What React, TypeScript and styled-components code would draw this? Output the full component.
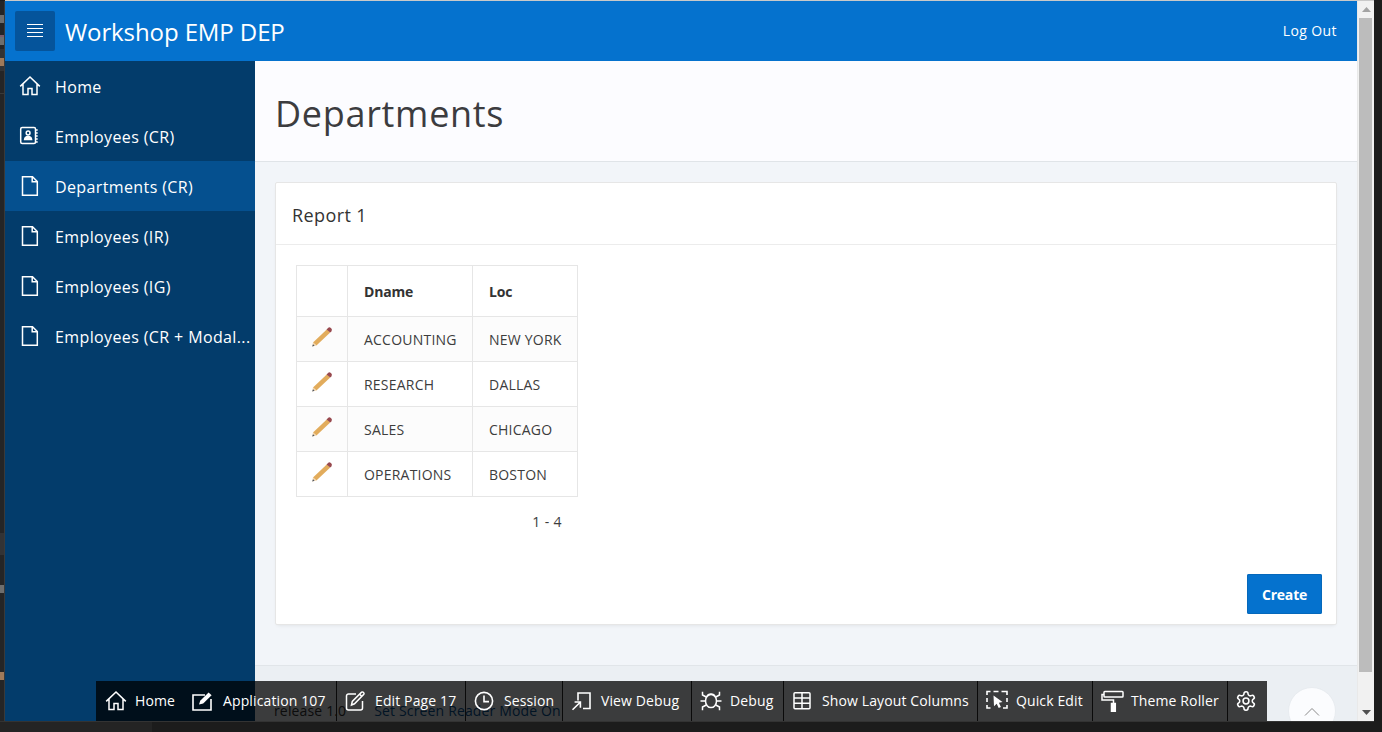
import React from "react";
import styled, { createGlobalStyle } from "styled-components";

const Global = createGlobalStyle`
  html, body { margin: 0; padding: 0; height: 100%; overflow: hidden; background: #1c1c1c; }
  body { font-family: "Open Sans", "Noto Sans", "Liberation Sans", sans-serif; }
  * { box-sizing: border-box; }
`;

const Desk = styled.div`
  width: 1382px;
  height: 732px;
  display: flex;
  flex-direction: column;
  background: #1c1c1c;
  overflow: hidden;
`;
const TopEdge = styled.div`
  height: 1px;
  flex: none;
  margin-left: 5px;
  width: 1369px;
  background: #c9c9c9;
`;
const Middle = styled.div`
  flex: none;
  height: 720px;
  display: flex;
`;
const BottomEdge = styled.div`
  flex: 1;
  display: flex;
  border-top: 1px solid #333;
  margin-right: 8px;
`;
const BottomLeft = styled.div`
  width: 152px;
  background: #242424;
`;
const LeftStrip = styled.div`
  width: 5px;
  flex: none;
  background: #252526;
  border-right: 1px solid #3a3a3a;
  position: relative;
  overflow: hidden;
`;
const StripBit = styled.span<{ $top: number; $c: string; $h?: number }>`
  position: absolute;
  left: 0;
  top: ${(p) => p.$top}px;
  width: 4px;
  height: ${(p) => p.$h ?? 8}px;
  background: ${(p) => p.$c};
`;
const Browser = styled.div`
  width: 1352px;
  flex: none;
  height: 720px;
  display: flex;
  flex-direction: column;
  position: relative;
  overflow: hidden;
  background: #f2f5f9;
`;
const Header = styled.header`
  flex: none;
  height: 60px;
  background: #0572ce;
  display: flex;
  align-items: center;
  padding: 0 20px 0 10px;
  color: #fff;
`;
const MenuBtn = styled.button`
  width: 40px;
  height: 40px;
  border: 0;
  border-radius: 2px;
  background: #05549b;
  color: #fff;
  display: flex;
  align-items: center;
  justify-content: center;
  padding: 0;
`;
const Brand = styled.div`
  margin-left: 10px;
  font-size: 24px;
  line-height: 32px;
  letter-spacing: -0.1px;
  flex: 1;
  margin-top: 1px;
`;
const LogOut = styled.a`
  font-size: 14px;
  letter-spacing: 0.4px;
  color: #fff;
  padding-bottom: 2px;
`;
const Body = styled.div`
  flex: 1;
  display: flex;
  min-height: 0;
`;
const Side = styled.nav`
  width: 250px;
  flex: none;
  background: #033c6b;
  display: flex;
  flex-direction: column;
`;
const NavItem = styled.div<{ $active?: boolean }>`
  height: 50px;
  flex: none;
  display: flex;
  align-items: center;
  padding-left: 14px;
  gap: 14px;
  background: ${(p) => (p.$active ? "#05508f" : "transparent")};
  color: #fff;
  font-size: 16px;
  letter-spacing: 0.38px;
  white-space: nowrap;
  svg { flex: none; }
`;
const NavLabel = styled.span`
  padding-top: 1px;
`;
const Main = styled.main`
  flex: 1;
  min-width: 0;
  display: flex;
  flex-direction: column;
`;
const TitleBar = styled.div`
  flex: none;
  height: 101px;
  background: #fcfcff;
  border-bottom: 1px solid #e0e4e8;
  padding: 0 20px;
  display: flex;
  align-items: center;
`;
const Title = styled.h1`
  margin: 0 0 -5px 0;
  font-size: 36px;
  font-weight: 400;
  letter-spacing: 0.7px;
  color: #3c3c3f;
`;
const Content = styled.div`
  flex: none;
  height: 504px;
  padding: 20px 20px 0;
  border-bottom: 1px solid #e1e5e9;
`;
const Card = styled.section`
  height: 443px;
  background: #fff;
  border: 1px solid #e6e6e6;
  border-radius: 2px;
  box-shadow: 0 2px 4px -2px rgba(0, 0, 0, 0.1);
  display: flex;
  flex-direction: column;
`;
const CardTitle = styled.div`
  height: 62px;
  flex: none;
  border-bottom: 1px solid #ececec;
  display: flex;
  align-items: center;
  padding: 2px 16px 0;
  font-size: 18px;
  letter-spacing: 0.4px;
  color: #333;
`;
const CardBody = styled.div`
  flex: 1;
  padding: 20px 20px 10px;
  display: flex;
  flex-direction: column;
`;
const ReportWrap = styled.div`
  width: 282px;
`;
const Table = styled.table`
  width: 282px;
  border-collapse: collapse;
  table-layout: fixed;
  font-size: 14px;
  letter-spacing: 0.22px;
  color: #3d3d3d;
`;
const Th = styled.th`
  height: 51px;
  border: 1px solid #e6e6e6;
  text-align: left;
  padding: 0 16px;
  font-weight: 700;
  letter-spacing: -0.2px;
  color: #333;
  background: #fff;
`;
const Row = styled.tr<{ $alt: boolean }>`
  background: ${(p) => (p.$alt ? "#fcfcfc" : "#fff")};
`;
const Td = styled.td`
  height: 45px;
  border: 1px solid #e6e6e6;
  padding: 1px 0 0 16px;
  white-space: nowrap;
`;
const EditTd = styled.td`
  height: 45px;
  border: 1px solid #e6e6e6;
  padding: 0 0 6px 14px;
  line-height: 0;
`;
const Pager = styled.div`
  text-align: right;
  font-size: 14px;
  letter-spacing: 0.4px;
  color: #3d3d3d;
  padding: 15px 16px 0 0;
  line-height: 20px;
`;
const Actions = styled.div`
  margin-top: auto;
  display: flex;
  justify-content: flex-end;
  margin-right: -6px;
`;
const CreateBtn = styled.button`
  width: 75px;
  height: 40px;
  border: 0;
  border-radius: 2px;
  background: #0572ce;
  color: #fff;
  font-family: inherit;
  font-weight: 700;
  font-size: 14px;
  letter-spacing: -0.2px;
  box-shadow: inset 0 0 0 1px #0568bb;
`;
const Footer = styled.footer`
  flex: 1;
  display: flex;
  background: #ebeff3;
  align-items: flex-end;
  padding: 0 0 0 19px;
  gap: 28px;
  font-size: 14px;
  line-height: 20px;
  letter-spacing: 0.15px;
  color: #333;
`;
const FooterLink = styled.a`
  color: #055091;
`;
const Toolbar = styled.div`
  position: absolute;
  left: 91px;
  bottom: 0;
  height: 40px;
  display: flex;
  background: rgba(0, 0, 0, 0.75);
  color: #fff;
  font-size: 14px;
  letter-spacing: 0.12px;
`;
const Tool = styled.div<{ $w: number; $pad: number; $gap: number; $sep?: boolean }>`
  width: ${(p) => p.$w}px;
  flex: none;
  display: flex;
  align-items: center;
  gap: ${(p) => p.$gap}px;
  padding-left: ${(p) => p.$pad}px;
  white-space: nowrap;
  border-right: ${(p) => (p.$sep ? "1px solid #0a0a0a" : "0")};
  svg { flex: none; }
`;
const ToolLabel = styled.span`
  padding-bottom: 2px;
`;
const TopButton = styled.div`
  position: absolute;
  left: 1283px;
  top: 686px;
  width: 48px;
  height: 48px;
  border-radius: 50%;
  background: #fbfcfe;
  border: 1px solid #e8ecf0;
  display: flex;
  justify-content: center;
  padding-top: 19px;
  color: #8a8a8a;
`;
const Scrollbar = styled.div`
  width: 17px;
  flex: none;
  background: #f1f1f1;
  display: flex;
  flex-direction: column;
  border-left: 1px solid #e9e9e9;
`;
const ArrowBox = styled.div`
  height: 17px;
  flex: none;
  display: flex;
  align-items: center;
  justify-content: center;
`;
const Thumb = styled.div`
  width: 13px;
  margin-left: 1px;
  height: 654px;
  background: #bcbcbc;
`;
const Spacer = styled.div`
  flex: 1;
`;

const stroke = { fill: "none", stroke: "currentColor", strokeWidth: 1.3 } as const;

const HomeIcon = ({ size = 22 }: { size?: number }) => (
  <svg width={size} height={size} viewBox="0 0 22 22" {...stroke} strokeWidth={1.5}>
    <path d="M1.2 11.4 11 2l9.8 9.4M4 9v10.6h5v-6h4v6h5V9" strokeLinejoin="miter" />
  </svg>
);
const AddressIcon = () => (
  <svg width="22" height="22" viewBox="0 0 22 22" {...stroke}>
    <rect x="1.7" y="2.6" width="14.8" height="15.8" rx="1.5" strokeWidth="1.5" />
    <path d="M16.500 5h2.200M16.500 8h2.200M16.500 11h2.200M16.500 14h2.200M16.500 17h2.200" />
    <circle cx="9.100" cy="8" r="1.900" strokeWidth="1.500" />
    <path d="M5.500 14.500c.3-2.200 1.600-3 3.600-3s3.300.8 3.600 3z" fill="currentColor" />
  </svg>
);
const PageIcon = () => (
  <svg width="22" height="22" viewBox="0 0 22 22" {...stroke}>
    <path d="M3.500 1.700h10l4.800 4.800v13.800H3.500zM13.200 1.700v5h5" strokeWidth="1.500" />
  </svg>
);
const Pencil = () => (
  <svg width="22" height="22" viewBox="0 0 22 22">
    <path d="M2 17.500 16 4.200l3.200 3.200L5.400 20.600z" fill="#e2ac5c" />
    <path d="M2 17.500 5.400 20.600 1.200 21.600z" fill="#f5d7ae" />
    <path d="M1.200 21.600 2 19.200l1.600 1.600z" fill="#4b5563" />
    <path d="M15.600 4.600 17 3a2 2 0 0 1 2.800 0l.6.6a2 2 0 0 1 0 2.600l-1.200 1.300z" fill="#98494f" />
  </svg>
);
const AppIcon = () => (
  <svg width="22" height="22" viewBox="0 0 22 22" {...stroke} strokeWidth={1.6}>
    <path d="M14 5H2v15h18V9" />
    <path d="M8 14.600 9.200 10.800 17.600 2.600l3 2.700-8.400 8.300z" fill="currentColor" stroke="none" />
  </svg>
);
const EditIcon = () => (
  <svg width="22" height="22" viewBox="0 0 22 22" {...stroke} strokeWidth={1.5}>
    <path d="M12 4H4.500a2 2 0 0 0-2 2v12a2 2 0 0 0 2 2h12a2 2 0 0 0 2-2v-7" />
    <path d="m7.500 15 .8-3.600L17.600 2.200a1.600 1.600 0 0 1 2.200 2.200l-9.300 9.400z" />
    <path d="m15.600 4.200 2.200 2.200" />
  </svg>
);
const ClockIcon = () => (
  <svg width="22" height="22" viewBox="0 0 22 22" {...stroke} strokeWidth={1.6}>
    <circle cx="11" cy="11" r="8.600" />
    <path d="M11 5.500V11.600H16" />
  </svg>
);
const ViewDebugIcon = () => (
  <svg width="22" height="22" viewBox="0 0 22 22" {...stroke} strokeWidth={1.6}>
    <path d="M8 10.500V3h12v15.500h-7" />
    <path d="M2.500 19.800 10 12.500M4.600 12H10.400V17.800" />
  </svg>
);
const BugIcon = () => (
  <svg width="24" height="22" viewBox="0 0 24 22" {...stroke} strokeWidth={1.5}>
    <ellipse cx="12" cy="11" rx="5.500" ry="6.600" />
    <path d="M8 6.500c.5-1.600 2-2.600 4-2.600s3.500 1 4 2.600M6.500 11H1.500M17.500 11h5M7.200 7 3.500 5V1.800M16.800 7l3.700-2V1.800M7.200 15l-3.700 2v3.200M16.800 15l3.700 2v3.200" />
  </svg>
);
const GridIcon = () => (
  <svg width="22" height="22" viewBox="0 0 22 22" {...stroke} strokeWidth={1.5}>
    <rect x="3" y="2.800" width="16" height="16" rx="1" />
    <path d="M3 8h16M3 13.300h16M11 2.800v16" />
  </svg>
);
const QuickEditIcon = () => (
  <svg width="22" height="22" viewBox="0 0 22 22" {...stroke} strokeWidth={1.6}>
    <path d="M1 5V1.500h3.500M7.500 1.500h5M15.500 1.500H21V5M21 8v4M21 15v3h-4M1 8v4M1 15v3h3.500" />
    <path d="M7.500 5.500 16.500 12l-3.600.7 2 4.300-2.200 1-2-4.300-2.700 2.500z" fill="currentColor" stroke="none" />
  </svg>
);
const RollerIcon = () => (
  <svg width="24" height="22" viewBox="0 0 24 22" {...stroke} strokeWidth={1.5}>
    <rect x="3" y="1.500" width="19" height="5.500" rx="0.800" />
    <path d="M3 4.500H1v5.500h11.500v3.500" />
    <rect x="10.500" y="13.500" width="3.800" height="8" fill="currentColor" />
  </svg>
);
const GearIcon = () => (
  <svg width="22" height="22" viewBox="0 0 24 24" {...stroke} strokeWidth={1.7} strokeLinejoin="round">
    <path d="M12.220 2h-.44a2 2 0 0 0-2 2v.180a2 2 0 0 1-1 1.730l-.43.250a2 2 0 0 1-2 0l-.150-.080a2 2 0 0 0-2.730.730l-.220.380a2 2 0 0 0 .730 2.730l.150.100a2 2 0 0 1 1 1.720v.510a2 2 0 0 1-1 1.740l-.150.090a2 2 0 0 0-.730 2.730l.220.380a2 2 0 0 0 2.730.730l.150-.080a2 2 0 0 1 2 0l.430.250a2 2 0 0 1 1 1.730V20a2 2 0 0 0 2 2h.440a2 2 0 0 0 2-2v-.180a2 2 0 0 1 1-1.730l.430-.250a2 2 0 0 1 2 0l.150.080a2 2 0 0 0 2.730-.730l.220-.390a2 2 0 0 0-.730-2.730l-.150-.080a2 2 0 0 1-1-1.740v-.500a2 2 0 0 1 1-1.740l.150-.090a2 2 0 0 0 .730-2.730l-.220-.380a2 2 0 0 0-2.730-.730l-.150.080a2 2 0 0 1-2 0l-.430-.250a2 2 0 0 1-1-1.730V4a2 2 0 0 0-2-2z" />
    <circle cx="12" cy="12" r="3.200" />
  </svg>
);

const navItems = [
  { label: "Home", icon: <HomeIcon /> },
  { label: "Employees (CR)", icon: <AddressIcon /> },
  { label: "Departments (CR)", icon: <PageIcon />, active: true },
  { label: "Employees (IR)", icon: <PageIcon /> },
  { label: "Employees (IG)", icon: <PageIcon /> },
  { label: "Employees (CR + Modal...", icon: <PageIcon /> },
];
const rows = [
  ["ACCOUNTING", "NEW YORK"],
  ["RESEARCH", "DALLAS"],
  ["SALES", "CHICAGO"],
  ["OPERATIONS", "BOSTON"],
];
const tools = [
  { label: "Home", icon: <HomeIcon />, w: 84, pad: 9, gap: 8 },
  { label: "Application 107", icon: <AppIcon />, w: 157, pad: 11, gap: 10, sep: true },
  { label: "Edit Page 17", icon: <EditIcon />, w: 129, pad: 7, gap: 9, sep: true },
  { label: "Session", icon: <ClockIcon />, w: 97, pad: 7, gap: 9, sep: true },
  { label: "View Debug", icon: <ViewDebugIcon />, w: 129, pad: 7, gap: 9, sep: true },
  { label: "Debug", icon: <BugIcon />, w: 92, pad: 7, gap: 7, sep: true },
  { label: "Show Layout Columns", icon: <GridIcon />, w: 194, pad: 7, gap: 9, sep: true },
  { label: "Quick Edit", icon: <QuickEditIcon />, w: 115, pad: 8, gap: 8, sep: true },
  { label: "Theme Roller", icon: <RollerIcon />, w: 135, pad: 8, gap: 6, sep: true },
  { label: "", icon: <GearIcon />, w: 39, pad: 7, gap: 0 },
];

export default function App() {
  return (
    <Desk>
      <Global />
      <TopEdge />
      <Middle>
        <LeftStrip>
          <StripBit $top={14} $c="#6e6e6e" />
          <StripBit $top={34} $c="#7a5a6a" $h={2} />
          <StripBit $top={36} $c="#6e6e6e" />
          <StripBit $top={48} $c="#333335" $h={22} />
          <StripBit $top={57} $c="#a07a5a" />
          <StripBit $top={92} $c="#3a3a3a" $h={1} />
          <StripBit $top={532} $c="#333335" $h={22} />
          <StripBit $top={584} $c="#6e6e6e" />
          <StripBit $top={671} $c="#a07a5a" />
        </LeftStrip>
        <Browser>
          <Header>
            <MenuBtn aria-label="Menu">
              <svg width="16" height="14" viewBox="0 0 16 14" fill="none" stroke="currentColor">
                <path d="M0 .5h16M0 4.500h16M0 8.500h16M0 12.500h16" />
              </svg>
            </MenuBtn>
            <Brand>Workshop EMP DEP</Brand>
            <LogOut>Log Out</LogOut>
          </Header>
          <Body>
            <Side>
              {navItems.map((n) => (
                <NavItem key={n.label} $active={n.active}>
                  {n.icon}
                  <NavLabel>{n.label}</NavLabel>
                </NavItem>
              ))}
            </Side>
            <Main>
              <TitleBar>
                <Title>Departments</Title>
              </TitleBar>
              <Content>
                <Card>
                  <CardTitle>Report 1</CardTitle>
                  <CardBody>
                    <ReportWrap>
                      <Table>
                        <colgroup>
                          <col width="51" />
                          <col width="125" />
                          <col width="105" />
                        </colgroup>
                        <thead>
                          <tr>
                            <Th />
                            <Th>Dname</Th>
                            <Th>Loc</Th>
                          </tr>
                        </thead>
                        <tbody>
                          {rows.map((r, i) => (
                            <Row key={r[0]} $alt={i % 2 === 0}>
                              <EditTd>
                                <Pencil />
                              </EditTd>
                              <Td>{r[0]}</Td>
                              <Td>{r[1]}</Td>
                            </Row>
                          ))}
                        </tbody>
                      </Table>
                      <Pager>1 - 4</Pager>
                    </ReportWrap>
                    <Actions>
                      <CreateBtn>Create</CreateBtn>
                    </Actions>
                  </CardBody>
                </Card>
              </Content>
              <Footer>
                <span>release 1.0</span>
                <FooterLink>Set Screen Reader Mode On</FooterLink>
              </Footer>
            </Main>
          </Body>
          <Toolbar>
            {tools.map((t, i) => (
              <Tool key={i} $w={t.w} $pad={t.pad} $gap={t.gap} $sep={t.sep}>
                {t.icon}
                {t.label && <ToolLabel>{t.label}</ToolLabel>}
              </Tool>
            ))}
          </Toolbar>
          <TopButton>
            <svg width="16" height="9" viewBox="0 0 16 9" fill="none" stroke="currentColor">
              <path d="M1 8.500 8 1.500l7 7" />
            </svg>
          </TopButton>
        </Browser>
        <Scrollbar>
          <ArrowBox>
            <svg width="9" height="5" viewBox="0 0 9 5"><path d="M4.500 0 9 5H0z" fill="#a3a3a3" /></svg>
          </ArrowBox>
          <Thumb />
          <Spacer />
          <ArrowBox>
            <svg width="9" height="5" viewBox="0 0 9 5"><path d="M0 0h9L4.500 5z" fill="#505050" /></svg>
          </ArrowBox>
        </Scrollbar>
      </Middle>
      <BottomEdge>
        <BottomLeft />
      </BottomEdge>
    </Desk>
  );
}
